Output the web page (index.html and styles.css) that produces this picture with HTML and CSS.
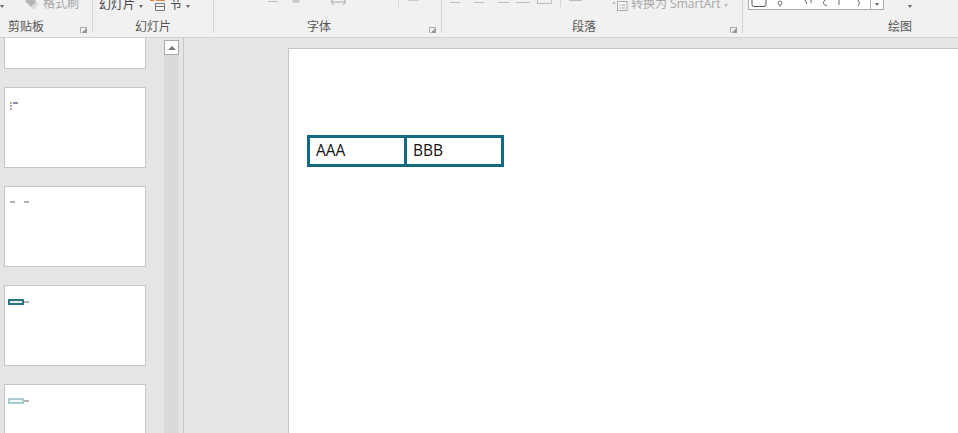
FILE: index.html
```html
<!DOCTYPE html>
<html lang="zh-CN">
<head>
    <meta charset="UTF-8">
    <meta name="viewport" content="width=device-width, initial-scale=1.0">
    <title>PowerPoint</title>
    <link rel="stylesheet" href="styles.css">
</head>
<body>
    <div class="ribbon">
        <div class="group group-clipboard">
            <div class="tools">
                <span class="caret"></span>
                <svg class="brush" width="16" height="11" viewBox="0 0 18 12"><path d="M1 2 L8 9 L14 3 L9 -2 Z" fill="#b5b5b5"/><path d="M8 9 L11 12 L16 6 L14 3 Z" fill="#d8d8d8"/></svg>
                <span class="tool-text muted">格式刷</span>
            </div>
            <div class="label-row"><span class="group-label">剪贴板</span><span class="launcher"></span></div>
        </div>
        <div class="group group-slides">
            <div class="tools">
                <span class="tool-text dark">幻灯片</span>
                <span class="caret"></span>
                <svg class="section-icon" width="15" height="11" viewBox="0 0 15 11"><path d="M0 0.500 H4 M6 0.500 H15" stroke="#e08a3c" fill="none"/><path d="M5.500 3.500 H14.500 V10.500 H5.500 Z M5.500 6.500 H14.500" stroke="#777" fill="none"/></svg>
                <span class="tool-text dark">节</span>
                <span class="caret"></span>
            </div>
            <div class="label-row"><span class="group-label">幻灯片</span></div>
        </div>
        <div class="group group-font">
            <div class="tools">
                <span class="dash"></span>
                <span class="blob"></span>
                <svg class="arrows" width="17" height="6" viewBox="0 0 17 6"><path d="M1 2 H16 M4 -1 L1 2 L4 5 M13 -1 L16 2 L13 5" stroke="#aaa" fill="none"/></svg>
                <span class="tick"></span>
                <span class="stub"></span>
            </div>
            <div class="label-row"><span class="group-label">字体</span><span class="launcher"></span></div>
        </div>
        <div class="group group-para">
            <div class="tools">
                <span class="dash"></span><span class="dash"></span><span class="dash"></span><span class="dash"></span>
                <span class="dash-box"></span>
                <span class="tick"></span>
                <span class="dash dash-last"></span>
                <svg class="smart-icon" width="16" height="11" viewBox="0 0 16 11"><path d="M0 4 L3 1 V4 Z" fill="#b5b5b5"/><rect x="5.500" y="1.500" width="9.500" height="9" fill="#f7f7f7" stroke="#aaa"/><path d="M7.500 5 H8.500 M10 5 H13 M7.500 8 H8.500 M10 8 H13" stroke="#999"/></svg>
                <span class="tool-text muted">转换为 SmartArt</span>
                <span class="caret caret-light"></span>
            </div>
            <div class="label-row"><span class="group-label">段落</span><span class="launcher"></span></div>
        </div>
        <div class="group group-draw">
            <div class="tools">
                <div class="gallery">
                    <svg width="121" height="9" viewBox="0 0 121 9"><path d="M3 0 V4.500 Q3 6.500 5 6.500 H15 Q17 6.500 17 4.500 V0" stroke="#555" fill="none"/><circle cx="31" cy="3" r="2" stroke="#777" fill="none"/><path d="M31 5 V7" stroke="#777"/><path d="M56 0 L58 4 M62 0 V3 M76 0 Q72 4 78 6 M90 0 V5 M109 0 Q112 3 109 6" stroke="#666" fill="none"/></svg>
                </div>
                <div class="gallery-btn"><span class="caret caret-dark"></span></div>
                <span class="caret caret-draw"></span>
            </div>
            <div class="label-row"><span class="group-label">绘图</span></div>
        </div>
    </div>

    <div class="workspace">
        <div class="thumbs">
            <div class="thumb thumb-cut"></div>
            <div class="thumb">
                <div class="mini-list"><span class="mark mark-wide"></span><span class="mark"></span><span class="mark"></span></div>
            </div>
            <div class="thumb">
                <div class="mini-row"><span class="mark mark-gray"></span><span class="mark mark-gray"></span></div>
            </div>
            <div class="thumb">
                <div class="mini-table"><span class="mini-box"></span><span class="mark mark-gray"></span></div>
            </div>
            <div class="thumb">
                <div class="mini-table"><span class="mini-box mini-box-light"></span><span class="mark mark-gray"></span></div>
            </div>
        </div>
        <div class="scrollbar">
            <div class="scroll-up"><span class="scroll-arrow"></span></div>
        </div>
        <div class="stage">
            <div class="slide">
                <table class="slide-table">
                    <tr><td>AAA</td><td>BBB</td></tr>
                </table>
            </div>
        </div>
    </div>
</body>
</html>
```

FILE: styles.css
```css
html, body {
    height: 100%;
}
body {
    margin: 0;
    overflow: hidden;
    display: flex;
    flex-direction: column;
    background-color: #e5e5e5;
    font-family: "Open Sans", "Noto Sans CJK SC", sans-serif;
    color: #444;
}

/* ribbon, cut off at the top of the window */
.ribbon {
    display: flex;
    flex: none;
    height: 37px;
    background-color: #f1f1f1;
    border-bottom: 1px solid #d2d2d2;
    overflow: hidden;
}
.group {
    display: flex;
    flex-direction: column;
    flex: none;
    height: 33px;
    box-sizing: border-box;
    border-right: 1px solid #d4d4d4;
}
.group-clipboard { width: 93px; }
.group-slides { width: 121px; }
.group-font { width: 228px; }
.group-para { width: 301px; }
.group-draw { flex: 1; border-right: none; }

.tools {
    display: flex;
    align-items: flex-end;
    flex: none;
    height: 12px;
    overflow: hidden;
}
.tool-text {
    flex: none;
    font-size: 12px;
    line-height: 14px;
    white-space: nowrap;
}
.dark { color: #444; }
.muted { color: #a6a6a6; margin-bottom: 1px; }
.caret {
    flex: none;
    width: 0;
    height: 0;
    margin-bottom: 4px;
    border-left: 2.500px solid transparent;
    border-right: 2.500px solid transparent;
    border-top: 3px solid #666;
}
.caret-light { border-top-color: #bbb; margin: 0 0 5px 4px; }
.caret-dark { margin: 0; }

.label-row {
    display: flex;
    align-items: flex-start;
    flex: none;
    height: 13px;
    margin-top: 8px;
}
.group-label {
    font-size: 12px;
    line-height: 13px;
    color: #555;
}
.launcher {
    width: 6px;
    height: 5px;
    margin: 7px 5px 0 auto;
    border-left: 1px solid #aaa;
    border-top: 1px solid #aaa;
    background: linear-gradient(135deg, transparent 50%, #999 50%);
}
.group-clipboard .group-label { margin-left: 8px; }
.group-slides .group-label { margin-left: 42px; }
.group-font .group-label { margin-left: 93px; }
.group-para .group-label { margin-left: 130px; }
.group-draw .group-label { margin-left: 145px; }

/* top row items */
.brush { flex: none; margin: 0 3px 2px 20px; }
.group-slides .tool-text:first-child { margin-left: 6px; }
.group-slides .caret { margin-left: 4px; }
.section-icon { flex: none; margin: 0 5px 1px 7px; }
.dash {
    flex: none;
    width: 10px;
    height: 1px;
    margin: 0 14px 9px 0;
    background-color: #bbb;
}
.blob {
    flex: none;
    width: 8px;
    height: 3px;
    margin: 0 0 9px 0;
    border-radius: 0 0 4px 4px;
    background-color: #ccc;
}
.tick {
    flex: none;
    width: 1px;
    height: 7px;
    margin-bottom: 5px;
    background-color: #d4d4d4;
}
.group-font .dash { margin: 0 14px 10px 54px; }
.arrows { flex: none; margin: 0 0 6px 30px; }
.group-font .tick { margin-left: 51px; }
.stub {
    flex: none;
    width: 11px;
    height: 1px;
    margin: 0 0 11px 9px;
    background-color: #ccc;
}
.group-para .dash:nth-child(1) { margin-left: 8px; }
.group-para .dash:nth-child(3) { width: 11px; margin-right: 7px; }
.group-para .dash:nth-child(4) { width: 14px; margin-right: 7px; }
.dash-box {
    flex: none;
    width: 13px;
    height: 3px;
    margin-bottom: 8px;
    border: 1px solid #bbb;
    border-top: none;
}
.group-para .tick { margin-left: 8px; }
.group-para .dash-last { width: 13px; margin: 0 0 11px 8px; }
.smart-icon { flex: none; margin: 0 3px 1px 30px; }

.gallery {
    flex: none;
    width: 123px;
    height: 10px;
    margin: 0 0 2px 5px;
    box-sizing: border-box;
    background-color: #fff;
    border: 1px solid #ababab;
    border-top: none;
}
.gallery svg { display: block; }
.gallery-btn {
    flex: none;
    display: flex;
    justify-content: center;
    align-items: center;
    width: 13px;
    height: 10px;
    margin-bottom: 2px;
    box-sizing: border-box;
    background-color: #fff;
    border: 1px solid #ababab;
    border-top: none;
    border-left: none;
}
.caret-draw { margin: 0 0 4px 24px; }

/* lower part */
.workspace {
    display: flex;
    flex: 1;
    min-height: 0;
}
.thumbs {
    display: flex;
    flex-direction: column;
    flex: none;
    gap: 18px;
    width: 164px;
    padding-left: 4px;
    box-sizing: border-box;
    overflow: hidden;
}
.thumb {
    flex: none;
    width: 142px;
    height: 81px;
    box-sizing: border-box;
    background-color: #fff;
    border: 1px solid #c6c6c6;
}
.thumb-cut {
    height: 31px;
    border-top: none;
}
.mini-list {
    display: flex;
    flex-direction: column;
    align-items: flex-start;
    gap: 1px;
    padding: 14px 0 0 5px;
}
.mini-row {
    display: flex;
    gap: 9px;
    padding: 14px 0 0 5px;
}
.mini-table {
    display: flex;
    align-items: center;
    padding: 13px 0 0 3px;
}
.mark {
    display: block;
    flex: none;
    width: 2px;
    height: 2px;
    background-color: #b9a9a0;
}
.mark-wide {
    width: 8px;
    background: linear-gradient(90deg, #c9b48c 25%, #fff 25%, #fff 40%, #8f8fa5 40%);
}
.mark-gray {
    width: 5px;
    background-color: #b4b4b8;
}
.mini-box {
    display: block;
    flex: none;
    width: 16px;
    height: 6px;
    box-sizing: border-box;
    border: 2px solid #2b7488;
    background-color: #e8eeef;
}
.mini-box-light {
    border-color: #a9cbd4;
    background-color: #f7f7f7;
}

.scrollbar {
    flex: none;
    width: 15px;
    margin-top: 2px;
    background-color: #dadada;
}
.scroll-up {
    display: flex;
    justify-content: center;
    align-items: center;
    height: 15px;
    box-sizing: border-box;
    background-color: #fff;
    border: 1px solid #ababab;
}
.scroll-arrow {
    width: 0;
    height: 0;
    border-left: 4px solid transparent;
    border-right: 4px solid transparent;
    border-bottom: 4px solid #777;
}
.stage {
    flex: 1;
    min-width: 0;
    margin-left: 4px;
    padding: 10px 0 0 104px;
    border-left: 1px solid #c6c6c6;
    overflow: hidden;
}
.slide {
    height: 100%;
    background-color: #fff;
    border-left: 1px solid #c6c6c6;
    border-top: 1px solid #c6c6c6;
    padding: 86px 0 0 18px;
}
.slide-table {
    border-collapse: collapse;
    font-size: 15.500px;
    line-height: 22px;
    color: #111;
}
.slide-table td {
    width: 97px;
    height: 29px;
    padding: 0 0 2px 6px;
    box-sizing: border-box;
    border: 3px solid #116a7f;
}
```
